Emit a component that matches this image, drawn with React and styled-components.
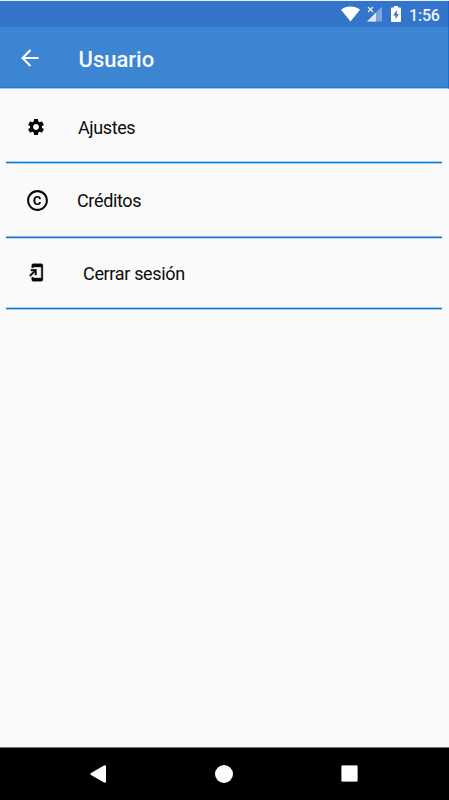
import React from "react";
import styled, { createGlobalStyle } from "styled-components";

const GlobalStyle = createGlobalStyle`
  * { box-sizing: border-box; }
  body { margin: 0; background: #fafafa; font-family: Roboto, sans-serif; }
`;

const Screen = styled.div`
  width: 449px;
  height: 800px;
  display: flex;
  flex-direction: column;
  background: #fafafa;
  border-top: 1px solid #e9f2fa;
  overflow: hidden;
`;

const StatusBar = styled.div`
  height: 26px;
  display: flex;
  align-items: center;
  justify-content: flex-end;
  padding: 0 9px 0 0;
  background: #3574cb;
  border-right: 1px solid #1a66c8;
  color: #fff;
`;

const StatusIcon = styled.svg`
  display: block;
  flex: none;
  margin-right: ${(p) => p.$gap}px;
`;

const Clock = styled.span`
  width: 30px;
  font-size: 16px;
  letter-spacing: -0.2px;
  line-height: 26px;
  font-weight: 500;
  white-space: nowrap;
  padding-top: 3px;
  color: #eaf3fd;
`;

const AppBar = styled.header`
  height: 62px;
  display: flex;
  align-items: center;
  padding: 1px 0 0 21px;
  background: #3c85d3;
  border-bottom: 1px solid #a3c8ea;
  border-right: 1px solid #1a6fcc;
  box-shadow: inset 0 -1px #2f76c4;
`;

const BackIcon = styled.svg`
  display: block;
  margin: 0 39.5px 1px 0;
`;

const Title = styled.h1`
  margin: 0;
  padding-top: 3px;
  font-size: 22px;
  line-height: 28px;
  font-weight: 500;
  color: #f7fbff;
`;

const Menu = styled.main`
  flex: 1;
  padding: 0 7px 0 6px;
`;

const MenuItem = styled.div`
  height: ${(p) => p.$height}px;
  display: flex;
  align-items: flex-start;
  padding: ${(p) => p.$top}px 0 0 ${(p) => p.$inset}px;
  border-bottom: 1px solid ${(p) => p.$below};
  box-shadow: inset 0 -1px ${(p) => p.$line}, inset 0 -2px ${(p) => p.$above};
`;

const ItemIcon = styled.svg`
  display: block;
  flex: none;
  margin-top: ${(p) => p.$drop || 0}px;
`;

const Label = styled.span`
  margin-left: ${(p) => p.$gap}px;
  font-size: 18px;
  line-height: 24px;
  letter-spacing: ${(p) => p.$tracking || 0}px;
  color: #0c0c0c;
`;

const NavBar = styled.nav`
  height: 53px;
  display: flex;
  align-items: center;
  padding: 0 0 1px 90px;
  gap: 108px;
  background: #000;
  border-top: 1px solid #777;
`;

const NavIcon = styled.svg`
  display: block;
  flex: none;
`;

export default function App() {
  return (
    <>
      <GlobalStyle />
      <Screen>
        <StatusBar>
          <StatusIcon $gap={7} width="19" height="16" viewBox="0 0 19 16" fill="#fff">
            <path d="M0 3.7C5.2-.5 13.8-.5 19 3.7L9.5 15.5Z" />
          </StatusIcon>
          <StatusIcon $gap={9} width="15" height="16" viewBox="0 0 15 16">
            <path d="M15 .5V15.5H0Z" fill="#7ba6df" />
            <path d="M9 6.5V15.5H0Z" fill="#dceaf8" />
            <path d="M1 1l5 5M6 1L1 6" stroke="#dceaf8" strokeWidth="1.4" />
          </StatusIcon>
          <StatusIcon $gap={8} width="10" height="16" viewBox="0 0 10 16">
            <path d="M3 0h4v1.6h2q1 0 1 1V15q0 1-1 1H1q-1 0-1-1V2.600q0-1 1-1h2Z" fill="#fff" />
            <path d="M5.800 4L2.300 9.500h2.200V13.500L7.800 8H5.800Z" fill="#3574cb" />
          </StatusIcon>
          <Clock>1:56</Clock>
        </StatusBar>
        <AppBar>
          <BackIcon width="18" height="18" viewBox="0 0 18 18" fill="none" stroke="#fff" strokeWidth="2">
            <path d="M17.500 9H1.500M9.500 1L1.500 9l8 8" />
          </BackIcon>
          <Title>Usuario</Title>
        </AppBar>
        <Menu>
          <MenuItem $height={75} $top={27} $inset={20} $line="#0879d9" $above="#a9d0f0" $below="#a9d0f0">
            <ItemIcon $drop={1} width="20" height="20" viewBox="0 0 24 24" fill="#080808">
              <path d="M19.140 12.940c.04-.3.060-.61.060-.94 0-.32-.02-.64-.07-.94l2.030-1.580c.18-.14.230-.41.120-.61l-1.920-3.320c-.12-.22-.37-.29-.59-.22l-2.390.960c-.5-.38-1.030-.7-1.620-.94l-.36-2.540c-.04-.24-.24-.41-.48-.41h-3.840c-.24 0-.43.170-.47.410l-.36 2.540c-.59.240-1.130.570-1.620.940l-2.390-.96c-.22-.08-.47 0-.59.220L2.740 8.870c-.12.210-.08.470.12.610l2.030 1.580c-.05.300-.09.630-.09.940s.02.640.070.940l-2.030 1.580c-.18.140-.23.410-.12.610l1.920 3.320c.12.220.370.290.590.220l2.390-.96c.5.380 1.030.700 1.620.940l.36 2.540c.05.240.240.410.480.410h3.840c.24 0 .44-.17.470-.41l.36-2.540c.59-.24 1.130-.56 1.620-.94l2.390.96c.22.080.470 0 .59-.22l1.920-3.320c.12-.22.070-.47-.12-.61l-2.010-1.580zM12 15.600c-1.980 0-3.600-1.620-3.600-3.600s1.620-3.600 3.600-3.600 3.600 1.620 3.600 3.600-1.620 3.600-3.600 3.600z" />
            </ItemIcon>
            <Label $gap={32} $tracking={-0.4}>Ajustes</Label>
          </MenuItem>
          <MenuItem $height={75} $top={25} $inset={19} $line="#1872cc" $above="#8db5e0" $below="#c2d9f0">
            <ItemIcon $drop={-1} width="25" height="25" viewBox="0 0 24 24" fill="#080808">
              <path d="M10.080 10.860c.05-.33.160-.62.300-.87s.34-.46.590-.62c.24-.15.540-.22.910-.23.230.010.440.050.630.130.200.090.380.210.520.360s.25.330.340.530.130.420.140.640h1.790c-.02-.47-.11-.9-.28-1.290s-.4-.73-.7-1.010-.66-.5-1.080-.66-.88-.23-1.390-.23c-.65 0-1.220.110-1.700.340s-.88.530-1.200.920-.56.840-.71 1.360S8 11.290 8 11.870v.27c0 .58.080 1.120.230 1.640s.39.970.710 1.350.72.690 1.200.910 1.050.340 1.700.340c.47 0 .91-.08 1.320-.23s.77-.36 1.080-.63.560-.58.740-.94.290-.74.300-1.150h-1.790c-.01.210-.06.400-.15.580s-.21.330-.36.460-.32.230-.52.300c-.19.070-.39.090-.6.100-.36-.01-.66-.08-.89-.23-.25-.16-.45-.37-.59-.62s-.25-.55-.3-.88-.08-.67-.08-1v-.27c0-.35.030-.68.080-1.010zM12 2C6.480 2 2 6.480 2 12s4.480 10 10 10 10-4.480 10-10S17.520 2 12 2zm0 18c-4.410 0-8-3.590-8-8s3.590-8 8-8 8 3.590 8 8-3.590 8-8 8z" />
            </ItemIcon>
            <Label $gap={27} $tracking={-0.35}>Créditos</Label>
          </MenuItem>
          <MenuItem $height={71} $top={23} $inset={21} $line="#1076d4" $above="#a9d0f0" $below="#a9d0f0">
            <ItemIcon $drop={1} width="19" height="19" viewBox="0 0 24 24" fill="#080808" stroke="#080808" strokeWidth="0.5">
              <path d="M18 1.010L8 1c-1.100 0-2 .9-2 2v3h2V5h10v14H8v-1H6v3c0 1.100.9 2 2 2h10c1.100 0 2-.9 2-2V3c0-1.100-.9-1.990-2-1.990zM10 15h2V8H5v2h3.590L3 15.590 4.410 17 10 11.410V15z" />
            </ItemIcon>
            <Label $gap={37} $tracking={-0.33}>Cerrar sesión</Label>
          </MenuItem>
        </Menu>
        <NavBar>
          <NavIcon width="17" height="18" viewBox="0 0 17 18" fill="#fff">
            <path d="M1 8L14 .4Q16 0 16 1.500v15Q16 18 14 17.600L1 10Q-.5 9 1 8Z" />
          </NavIcon>
          <NavIcon width="18" height="18" viewBox="0 0 18 18" fill="#fff">
            <circle cx="9" cy="9" r="9" />
          </NavIcon>
          <NavIcon width="17" height="17" viewBox="0 0 17 17">
            <rect x=".5" y=".5" width="16" height="16" rx="1" fill="#fff" stroke="#bbb" strokeWidth=".5" />
          </NavIcon>
        </NavBar>
      </Screen>
    </>
  );
}
